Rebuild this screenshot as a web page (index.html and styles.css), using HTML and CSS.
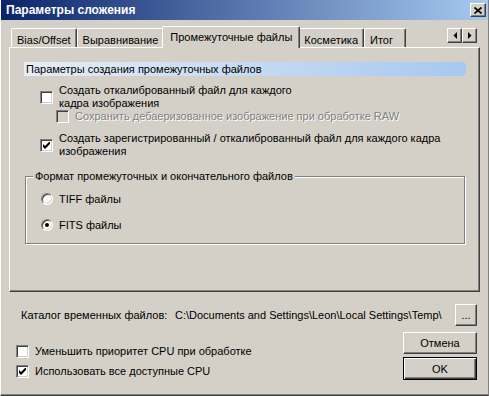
FILE: index.html
```html
<!DOCTYPE html>
<html>

<head>
    <meta charset="utf-8">
    <title>Параметры сложения</title>
    <link rel="stylesheet" href="styles.css">
</head>

<body>
    <div class="window">
        <!-- заголовок окна -->
        <div class="titlebar">
            <span class="caption">Параметры сложения</span>
            <span class="btn-close">
                <svg width="8" height="7" viewBox="0 0 8 7"><path d="M0.5 0.5L7.5 6.5M7.5 0.5L0.5 6.5" stroke="#000" stroke-width="1.7"/></svg>
            </span>
        </div>

        <!-- вкладки -->
        <div class="tabs">
            <div class="tab">Bias/Offset</div>
            <div class="tab">Выравнивание</div>
            <div class="tab tab-active">Промежуточные файлы</div>
            <div class="tab">Косметика</div>
            <div class="tab tab-last">Итог</div>
            <div class="tab-scroll">
                <span class="scroll-btn"><svg width="4" height="7" viewBox="0 0 4 7"><path d="M4 0V7L0.5 3.5Z"/></svg></span>
                <span class="scroll-btn"><svg width="4" height="7" viewBox="0 0 4 7"><path d="M0 0V7L3.5 3.5Z"/></svg></span>
            </div>
        </div>

        <div class="panel">
            <div class="section-bar">Параметры создания промежуточных файлов</div>

            <div class="opt opt-first">
                <span class="chk"></span>
                <span class="opt-text">Создать откалиброванный файл для каждого<br>кадра изображения</span>
            </div>
            <div class="opt opt-sub opt-disabled">
                <span class="chk"></span>
                <span class="opt-text">Сохранить дебаеризованное изображение при обработке RAW</span>
            </div>
            <div class="opt opt-reg">
                <span class="chk"><svg width="7" height="7" viewBox="0 0 7 7"><polygon points="0,2 2,4 7,-1 7,2 2,7 0,5"/></svg></span>
                <span class="opt-text">Создать зарегистрированный / откалиброванный файл для каждого кадра<br>изображения</span>
            </div>

            <!-- формат файлов -->
            <div class="group">
                <span class="group-title">Формат промежуточных и окончательного файлов</span>
                <div class="radio-row"><span class="radio"></span>TIFF файлы</div>
                <div class="radio-row"><span class="radio radio-on"></span>FITS файлы</div>
            </div>
        </div>

        <div class="footer">
            <div class="temp-row">
                <span class="temp-label">Каталог временных файлов:</span>
                <span class="temp-path">C:\Documents and Settings\Leon\Local Settings\Temp\</span>
                <span class="button btn-browse">...</span>
            </div>
            <div class="bottom-row">
                <div class="cpu-opts">
                    <div class="opt">
                        <span class="chk"></span>
                        <span class="opt-text">Уменьшить приоритет CPU при обработке</span>
                    </div>
                    <div class="opt">
                        <span class="chk"><svg width="7" height="7" viewBox="0 0 7 7"><polygon points="0,2 2,4 7,-1 7,2 2,7 0,5"/></svg></span>
                        <span class="opt-text">Использовать все доступные CPU</span>
                    </div>
                </div>
                <div class="actions">
                    <span class="button">Отмена</span>
                    <span class="button button-default">OK</span>
                </div>
            </div>
        </div>
    </div>
</body>

</html>
```

FILE: styles.css
```css
* {
    box-sizing: border-box;
}

body {
    margin: 0;
    background: #d4d0c8;
    font: 11px "Liberation Sans", Arial, sans-serif;
    color: #000;
}

/* окно */
.window {
    width: 489px;
    height: 396px;
    background: #d4d0c8;
    border-left: 1px solid #fff;
    border-right: 1px solid #808080;
    border-bottom: 1px solid #404040;
    box-shadow: inset 0 -1px #808080;
}

.titlebar {
    height: 20px;
    display: flex;
    align-items: center;
    justify-content: space-between;
    padding: 0 2px 0 5px;
    background: linear-gradient(to right, #0a246a, #a6caf0);
}

.caption {
    color: #fff;
    font-weight: bold;
    font-size: 12px;
}

.btn-close {
    width: 16px;
    height: 14px;
    display: flex;
    align-items: center;
    justify-content: center;
    background: #d4d0c8;
    border: 1px solid;
    border-color: #fff #404040 #404040 #fff;
    box-shadow: inset -1px -1px #808080;
}

/* вкладки */
.tabs {
    display: flex;
    align-items: flex-end;
    width: 471px;
    height: 21px;
    margin: 6px 0 0 8px;
    padding-left: 2px;
}

.tab {
    height: 19px;
    padding: 4px 5px 0;
    line-height: 14px;
    white-space: nowrap;
    border: 1px solid;
    border-color: #fff #404040 transparent #fff;
    border-bottom: 0;
    border-radius: 2px 2px 0 0;
    box-shadow: inset -1px 0 #808080;
    background: #d4d0c8;
}

.tab-last {
    min-width: 42px;
}

.tab-active {
    position: relative;
    z-index: 1;
    height: 22px;
    margin: 0 -2px -1px;
    padding: 3px 7px 0;
}

.tab-scroll {
    display: flex;
    align-self: flex-start;
    margin: 2px 3px 0 auto;
}

.scroll-btn {
    width: 15px;
    height: 15px;
    display: flex;
    align-items: center;
    justify-content: center;
    border: 1px solid;
    border-color: #fff #404040 #404040 #fff;
    box-shadow: inset -1px -1px #808080;
}

/* панель вкладки */
.panel {
    width: 471px;
    height: 245px;
    margin-left: 8px;
    padding: 14px 13px 0 14px;
    border: 1px solid;
    border-color: #fff #404040 #404040 #fff;
    box-shadow: inset -1px -1px #808080;
}

.section-bar {
    height: 14px;
    line-height: 14px;
    padding-left: 2px;
    background: linear-gradient(to right, #e6edf6, #a6c8f0);
    border-radius: 0 4px 4px 0;
}

.opt {
    display: flex;
    align-items: center;
    gap: 6px;
}

.opt-text {
    line-height: 13px;
}

.opt-first {
    margin: 8px 0 0 16px;
}

.opt-sub {
    margin-left: 32px;
}

.opt-reg {
    margin: 9px 0 0 16px;
}

.opt-disabled .opt-text {
    color: #808080;
    text-shadow: 1px 1px #fff;
}

.opt-disabled .chk {
    background: #d4d0c8;
}

/* флажок */
.chk {
    flex-shrink: 0;
    width: 13px;
    height: 13px;
    display: flex;
    align-items: center;
    justify-content: center;
    background: #fff;
    border: 1px solid;
    border-color: #808080 #fff #fff #808080;
    box-shadow: inset 1px 1px #404040, inset -1px -1px #d4d0c8;
}

/* группа */
.group {
    position: relative;
    margin: 18px 1px 0;
    padding: 15px 0 12px 15px;
    border: 1px solid #808080;
    box-shadow: inset 1px 1px #fff, 1px 1px #fff;
}

.group-title {
    position: absolute;
    top: -7px;
    left: 7px;
    padding: 0 2px;
    line-height: 13px;
    background: #d4d0c8;
}

.radio-row {
    display: flex;
    align-items: center;
    gap: 6px;
    height: 13px;
}

.radio-row + .radio-row {
    margin-top: 13px;
}

.radio {
    width: 12px;
    height: 12px;
    display: flex;
    align-items: center;
    justify-content: center;
    border-radius: 50%;
    background: #fff;
    border: 1px solid;
    border-color: #808080 #fff #fff #808080;
    box-shadow: inset 1px 1px #404040, inset -1px -1px #d4d0c8;
}

.radio-on::after {
    content: "";
    width: 4px;
    height: 4px;
    border-radius: 50%;
    background: #000;
}

/* низ окна */
.footer {
    padding: 12px 11px 0 15px;
}

.temp-row {
    display: flex;
    align-items: center;
    height: 22px;
    padding-left: 5px;
}

.temp-label {
    width: 154px;
}

.button {
    display: flex;
    align-items: center;
    justify-content: center;
    height: 22px;
    background: #d4d0c8;
    border: 1px solid;
    border-color: #fff #404040 #404040 #fff;
    box-shadow: inset -1px -1px #808080;
}

.btn-browse {
    width: 22px;
    margin-left: auto;
}

.bottom-row {
    display: flex;
    justify-content: space-between;
    margin-top: 6px;
}

.cpu-opts {
    padding-top: 13px;
}

.cpu-opts .opt + .opt {
    margin-top: 7px;
}

.actions {
    display: flex;
    flex-direction: column;
    gap: 3px;
    width: 74px;
}

.button-default {
    height: 23px;
    border-color: #000;
    box-shadow: inset 1px 1px #fff, inset -1px -1px #404040, inset -2px -2px #808080;
}
```
